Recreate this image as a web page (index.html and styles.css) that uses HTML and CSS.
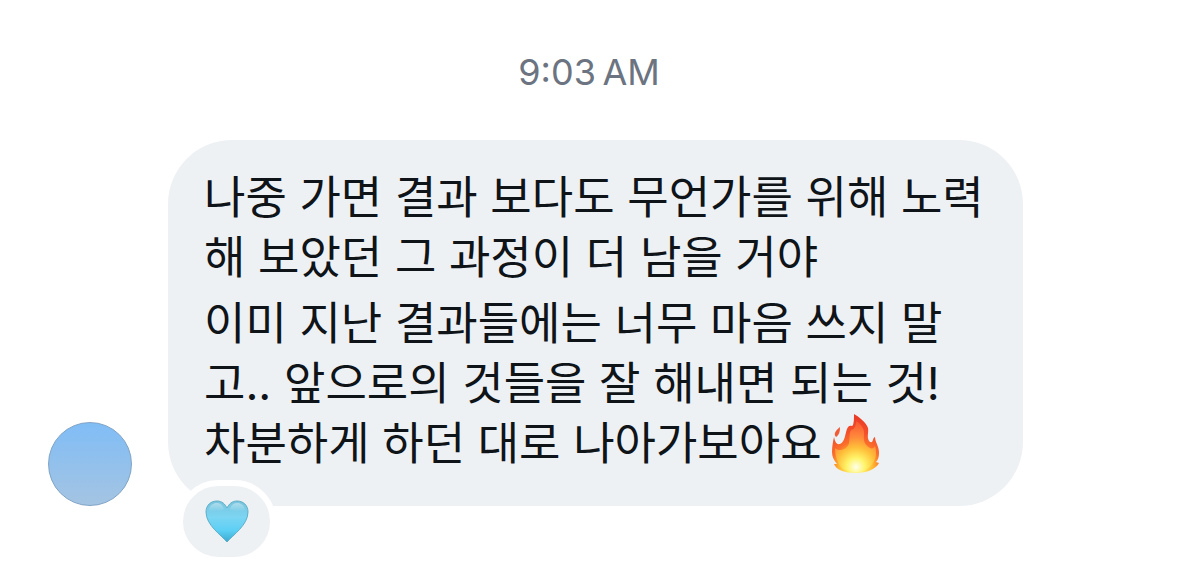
FILE: index.html
```html
<!DOCTYPE html>
<html lang="ko">
<head>
<meta charset="utf-8">
<meta name="viewport" content="width=device-width, initial-scale=1">
<title>Messages</title>
<link rel="stylesheet" href="styles.css">
</head>
<body>
<main class="chat">
  <time class="timestamp" datetime="09:03">9:03&#8239;AM</time>
  <article class="message">
    <div class="avatar" role="img" aria-label="Profile picture"></div>
    <div class="bubble">
      <p class="paragraph">나중 가면 결과 보다도 무언가를 위해 노력<br>해 보았던 그 과정이 더 남을 거야</p>
      <p class="paragraph">이미 지난 결과들에는 너무 마음 쓰지 말<br>고.. 앞으로의 것들을 잘 해내면 되는 것!<br>차분하게 하던 대로 나아가보아요<svg class="fire" viewBox="0 0 48 60" role="img" aria-label="Fire">
        <defs>
          <radialGradient id="flame" gradientUnits="userSpaceOnUse" cx="24" cy="53" r="50">
            <stop offset="0" stop-color="#fffbd0"/>
            <stop offset=".16" stop-color="#fff06a"/>
            <stop offset=".34" stop-color="#ffb830"/>
            <stop offset=".5" stop-color="#fb702a"/>
            <stop offset=".7" stop-color="#f4502b"/>
            <stop offset="1" stop-color="#ea3b26"/>
          </radialGradient>
          <radialGradient id="inner" gradientUnits="userSpaceOnUse" cx="24" cy="53" r="46">
            <stop offset="0" stop-color="#ffffea"/>
            <stop offset=".2" stop-color="#fff469"/>
            <stop offset=".42" stop-color="#ffc03a"/>
            <stop offset=".65" stop-color="#ff8a3a"/>
            <stop offset="1" stop-color="#ff6c3c" stop-opacity=".5"/>
          </radialGradient>
        </defs>
        <path fill="url(#flame)" d="M22 0C27 3 34 8 36 14C37 19 34 24 38 28C42 29 40 24 43 23C43 28 47 32 47 39C47 43 46 46 44 48L47 49C44 55 35 59 24 59C13 59 4 56 2 50L5 50C2 46 0 43 0 38C0 32 1 28 2 23C3 27 4 31 8 30C13 28 13 20 15 15C16 13 17 11 20 12C22 11 22 5 22 0Z"/>
        <path fill="#f25a35" d="M8 13C8 18 7 21 4 23C1 20 4 16 8 13Z"/>
        <path fill="url(#inner)" d="M24 7C29 10 33 15 32 21C31 28 34 32 38 34C40 35 42 34 43 32C45 38 44 45 41 49C37 55 31 58 24 58C15 58 8 55 6 48C4 44 3 39 3 34C7 38 15 36 17 29C18 24 17 19 19 16C23 15 24 12 24 7Z"/>
      </svg></p>
      <button class="reaction" type="button" aria-label="Light blue heart reaction">
        <svg class="heart" viewBox="0 0 44 44" aria-hidden="true">
          <defs>
            <linearGradient id="blue" x1="0" y1="0" x2="0" y2="1">
              <stop offset="0" stop-color="#79c3dc"/>
              <stop offset=".4" stop-color="#7bd5f3"/>
              <stop offset=".72" stop-color="#5ccff5"/>
              <stop offset="1" stop-color="#3aa9cf"/>
            </linearGradient>
            <linearGradient id="shine" x1="0" y1="0" x2="0" y2="1">
              <stop offset="0" stop-color="#fff" stop-opacity=".4"/>
              <stop offset="1" stop-color="#fff" stop-opacity="0"/>
            </linearGradient>
          </defs>
          <path fill="url(#blue)" stroke="#5fafc8" stroke-width="1" d="M22 42C16 35 1 25 1 12C1 5 6 1 12 1C17 1 20 4 22 8C24 4 27 1 32 1C38 1 43 5 43 12C43 25 28 35 22 42Z"/>
          <path fill="url(#shine)" d="M4 10C5 5 8 3 12 3C16 3 18 6 19 9C16 12 7 12 4 10ZM25 9C26 6 28 3 32 3C36 3 39 5 40 10C37 12 28 12 25 9Z"/>
        </svg>
      </button>
    </div>
  </article>
</main>
</body>
</html>
```
FILE: styles.css
```css
* { box-sizing: border-box; }
body { margin: 0; background: #fff; color: #0f1419; font-family: Inter, "Noto Sans CJK KR", sans-serif; }
.chat { padding: 50px 48px 76px; }
.timestamp { display: block; text-align: center; font-size: 36px; line-height: 44px; color: #6b7480; }
.message { display: flex; align-items: flex-end; gap: 36px; margin-top: 46px; }
.avatar { flex: none; width: 84px; height: 84px; border: 1px solid #7fa3c5; border-radius: 50%; background: linear-gradient(#80bdf6, #a4c4e2); }
.bubble { position: relative; padding: 28px 39px 32px 36px; border-radius: 64px; background: #eef1f4; font-size: 45px; line-height: 60px; }
.paragraph { margin: 0; white-space: nowrap; }
.paragraph + .paragraph { margin-top: 6px; }
.fire { width: 48px; height: 60px; margin: -12px 0 -4px 10px; vertical-align: middle; }
.reaction { position: absolute; left: 9px; bottom: -57px; display: flex; align-items: center; justify-content: center; width: 99px; height: 83px; padding: 0; border: 6px solid #fff; border-radius: 42px; background: #eef1f4; }
.heart { width: 44px; height: 44px; }
```
